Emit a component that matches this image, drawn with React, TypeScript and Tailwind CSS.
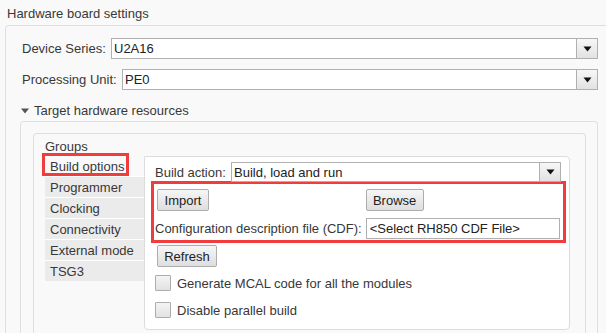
import React from "react";

const TABS = ["Programmer", "Clocking", "Connectivity", "External mode", "TSG3"];

function Arrow() {
  return (
    <svg width="9" height="6" viewBox="0 0 9 6" className="block">
      <path d="M0.5 0.5h8L4.5 5.5z" fill="#111" />
    </svg>
  );
}

function Combo({ value, h = "h-[21px]" }: { value: string; h?: string }) {
  return (
    <div className={`flex-1 flex ${h} border border-[#b0b0b0] bg-white`}>
      <div className="flex-1 pl-[2px] flex items-center text-[#222]">{value}</div>
      <div className="w-[21px] border-l border-[#b0b0b0] bg-gradient-to-b from-[#f7f7f7] to-[#e2e2e2] flex items-center justify-center">
        <Arrow />
      </div>
    </div>
  );
}

function Btn({ label, w }: { label: string; w: string }) {
  return (
    <div
      className={`${w} h-[22px] border border-[#adadad] rounded-[2px] bg-gradient-to-b from-[#f6f6f6] to-[#dedede] flex items-center justify-center text-[#222]`}
    >
      {label}
    </div>
  );
}

function Check({ label }: { label: string }) {
  return (
    <div className="flex items-center h-[16px]">
      <div className="w-[16px] h-[16px] border border-[#adadad] rounded-[1px] bg-gradient-to-b from-[#f4f4f4] to-[#e2e2e2]" />
      <span className="ml-[6px]">{label}</span>
    </div>
  );
}

export default function App() {
  return (
    <div className="w-[606px] h-[333px] overflow-hidden bg-[#f9f9f9] font-['Liberation_Sans',Arial,sans-serif] text-[13px] leading-[15px] text-[#383838]">
      {/* title */}
      <div className="h-[25px] pl-[7px] pt-[6px]">Hardware board settings</div>

      {/* outer panel */}
      <div className="ml-[5px] -mr-[12px] border-t border-l border-[#dfdfdf] rounded-tl-[4px] pl-[16px] pr-[20px] pt-[12px]">
        <div className="flex items-center">
          <span className="w-[89px]">Device Series:</span>
          <Combo value="U2A16" />
        </div>
        <div className="flex items-center mt-[10px]">
          <span className="w-[100px]">Processing Unit:</span>
          <Combo value="PE0" />
        </div>

        <div className="flex items-center mt-[13px] h-[15px]">
          <svg width="8" height="6" viewBox="0 0 8 6" className="ml-[-1px] mr-[5px]">
            <path d="M0 0.5h8L4 5.5z" fill="#555" />
          </svg>
          <span>Target hardware resources</span>
        </div>

        {/* target hardware panel */}
        <div className="mt-[3px] -ml-[2px] border-t border-l border-r border-[#dfdfdf] rounded-t-[4px] pt-[11px] pl-[12px] pr-[11px]">
          {/* groups panel */}
          <div className="border-t border-l border-r border-[#dfdfdf] rounded-t-[4px] pl-[11px] pr-[15px] pt-[5px] h-[220px]">
            <div className="h-[17px]">Groups</div>
            <div className="flex">
              {/* tab list */}
              <div className="w-[99px] shrink-0">
                <div className="relative h-[20px] pl-[5px] flex items-center">
                  Build options
                  <div className="absolute left-[-3px] top-[-3px] w-[87px] h-[23px] border-[3px] border-[#f03c3c]" />
                </div>
                {TABS.map((t) => (
                  <div key={t} className="h-[21px] pl-[5px] flex items-center bg-[#ebebeb] border-t border-white">
                    {t}
                  </div>
                ))}
              </div>

              {/* content panel */}
              <div className="flex-1 h-[174px] bg-white border border-[#dcdcdc] rounded-[4px] rounded-tl-none pl-[10px] pr-[8px] pt-[5px]">
                <div className="flex items-center">
                  <span className="w-[76px]">Build action:</span>
                  <Combo value="Build, load and run" h="h-[20px]" />
                </div>

                <div className="-ml-[4px] -mr-[5px] -mt-[1px] border-[3px] border-[#f03c3c] pl-[3px] pr-[3px] pt-[5px]">
                  <div className="grid grid-cols-[auto_1fr] gap-x-[4px] gap-y-[7px] items-center">
                    <Btn label="Import" w="w-[52px]" />
                    <Btn label="Browse" w="w-[58px]" />
                    <span className="-ml-[2px]">Configuration description file (CDF):</span>
                    <div className="h-[21px] border border-[#b0b0b0] bg-white pl-[3px] flex items-center text-[#222]">
                      &lt;Select RH850 CDF File&gt;
                    </div>
                  </div>
                  <div className="h-[1px]" />
                </div>

                <div className="mt-[2px] ml-[2px]">
                  <Btn label="Refresh" w="w-[60px]" />
                </div>
                <div className="mt-[8px]">
                  <Check label="Generate MCAL code for all the modules" />
                </div>
                <div className="mt-[11px]">
                  <Check label="Disable parallel build" />
                </div>
              </div>
            </div>
          </div>
        </div>
      </div>
    </div>
  );
}
